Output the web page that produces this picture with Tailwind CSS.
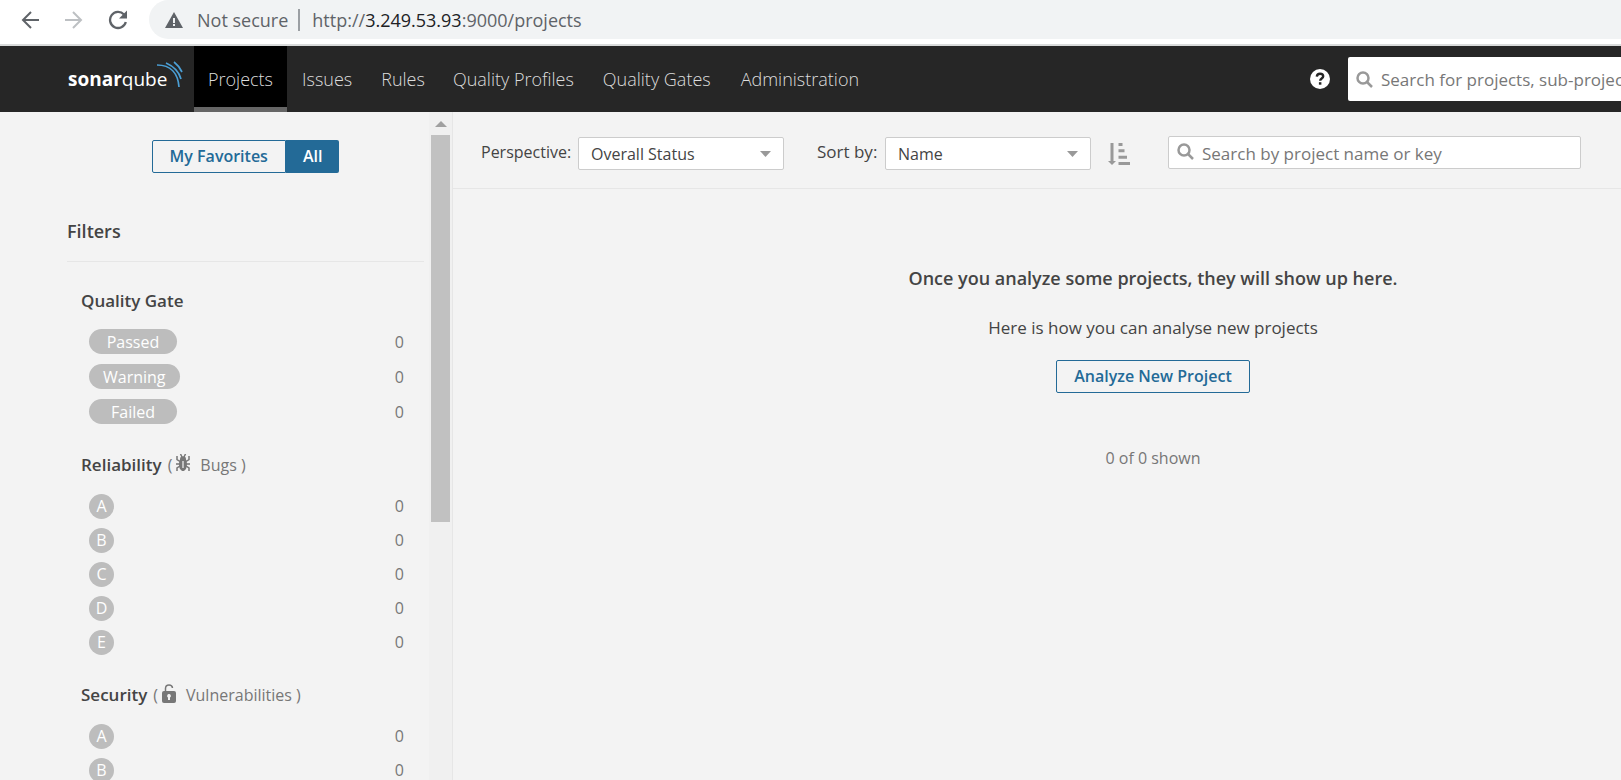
<!DOCTYPE html>
<html lang="en">
<head>
<meta charset="utf-8">
<title>Projects</title>
<script src="https://cdn.jsdelivr.net/npm/@tailwindcss/browser@4"></script>
</head>
<body class="flex h-screen flex-col overflow-hidden bg-[#f3f3f3] font-['Open_Sans','Noto_Sans',sans-serif] text-[17px] leading-6 font-normal text-[#444]">

<!-- Browser toolbar -->
<div class="flex h-[46px] shrink-0 items-start border-b-2 border-[#d9dbdb] bg-white">
  <div class="flex h-[39px] w-[149px] shrink-0 items-center gap-6 pl-5 text-[#5f6368]">
    <button aria-label="Back" class="size-5"><svg viewBox="0 0 20 20" class="size-5" fill="none" stroke="currentColor" stroke-width="2"><path d="M19 10H3M11 2L3 10l8 8"/></svg></button>
    <button aria-label="Forward" class="size-5 text-[#bdc0c3]"><svg viewBox="0 0 20 20" class="size-5" fill="none" stroke="currentColor" stroke-width="2"><path d="M1 10h16M9 2l8 8-8 8"/></svg></button>
    <button aria-label="Reload" class="size-5"><svg viewBox="0 0 20 20" class="size-5" fill="none" stroke="currentColor" stroke-width="2.3"><path d="M16 4.600A8 8 0 1 0 17.800 12"/><path d="M19 .5V8.500h-8z" fill="currentColor" stroke="none"/></svg></button>
  </div>
  <div class="flex h-[39px] min-w-0 flex-1 items-center rounded-l-full bg-[#f1f3f4] pl-4 text-lg text-[#5f6368]">
    <svg viewBox="0 0 18 16" class="mr-3.5 h-4 w-[18px] shrink-0"><path d="M9 0l9 16H0z" fill="#5f6368"/><path d="M8 6h2v5H8zM8 12h2v2H8z" fill="#f1f3f4"/></svg>
    <span class="whitespace-nowrap">Not secure</span>
    <span class="mr-3 ml-2.5 h-[22px] w-0.5 bg-[#9b9fa3]"></span>
    <span class="whitespace-nowrap">http://<span class="text-[#202124]">3.249.53.93</span>:9000/projects</span>
  </div>
</div>

<!-- Application navigation -->
<header class="flex h-[66px] shrink-0 items-stretch bg-[#262626] pl-[68px] text-[#ddd]">
  <a href="#" aria-label="SonarQube" class="flex w-[126px] shrink-0 items-center text-[19px] text-white">
    <span class="font-bold">sonar</span><span>qube</span>
    <svg viewBox="0 0 26 28" class="-ml-2.5 mb-2 h-7 w-[26px] shrink-0" fill="none" stroke="#4b9fd5" stroke-width="1.700"><path d="M0 4C14 4 21 13 22 26M9 2C16 5 22 11 24 18M17 1C21 4 23 7 25 11"/></svg>
  </a>
  <nav class="flex items-stretch text-lg font-[350]">
    <a href="#" class="flex items-center border-b-[5px] border-[#666] bg-black px-3.5 pt-[5px]">Projects</a>
    <a href="#" class="flex items-center px-[15px]">Issues</a>
    <a href="#" class="flex items-center px-3.5">Rules</a>
    <a href="#" class="flex items-center px-3.5">Quality Profiles</a>
    <a href="#" class="flex items-center px-[15px]">Quality Gates</a>
    <a href="#" class="flex items-center px-[15px]">Administration</a>
  </nav>
  <div class="ml-auto flex w-[311px] shrink-0 items-center gap-[18px] overflow-hidden">
    <button aria-label="Help" class="size-5 shrink-0"><svg viewBox="0 0 20 20" class="size-5"><circle cx="10" cy="10" r="10" fill="#fff"/><path d="M6.800 7.600C7 5.600 8.300 4.700 10 4.700s3.200 1 3.200 2.600c0 2.200-3 2.200-3 4.400" fill="none" stroke="#262626" stroke-width="2.400"/><path d="M8.900 13.200h2.500v2.500H8.900z" fill="#262626"/></svg></button>
    <label class="flex h-11 w-[413px] shrink-0 items-center gap-2 rounded-[2px] bg-white pl-2">
      <svg viewBox="0 0 17 17" class="size-[17px] shrink-0" fill="none" stroke="#999" stroke-width="2.500"><circle cx="7" cy="7" r="5.500"/><path d="M11 11l5 5"/></svg>
      <input aria-label="Search for projects" placeholder="Search for projects, sub-projects and files..." class="w-full bg-transparent pt-0.5 outline-none placeholder:text-[#777]">
    </label>
  </div>
</header>

<div class="flex min-h-0 flex-1">
  <!-- Filters -->
  <aside class="flex w-[453px] shrink-0 overflow-hidden border-r border-[#e6e6e6]">
    <div class="min-w-0 flex-1 pt-7 pr-[5px] pl-[67px]">
      <div class="flex justify-center text-base font-semibold">
        <button class="h-[33px] rounded-l-[2px] border border-[#236a97] px-[17px] pb-0.5 text-[#236a97]">My Favorites</button>
        <button class="h-[33px] rounded-r-[2px] bg-[#236a97] px-[17px] pb-0.5 text-white">All</button>
      </div>
      <h2 class="mt-[46px] h-[43px] border-b border-[#e6e6e6] text-lg leading-6 font-semibold">Filters</h2>

      <section class="mt-[27px] pr-5 pl-3.5">
        <h3 class="mb-[11px] flex h-6 items-center font-semibold">Quality Gate</h3>
        <ul class="pl-2 text-base text-[#777]">
          <li class="flex h-[35px] items-center justify-between"><span class="flex h-[25px] min-w-[88px] items-center justify-center rounded-full bg-[#bdbdbd] px-3.5 text-white">Passed</span>0</li>
          <li class="flex h-[35px] items-center justify-between"><span class="flex h-[25px] min-w-[88px] items-center justify-center rounded-full bg-[#bdbdbd] px-3.5 text-white">Warning</span>0</li>
          <li class="flex h-[35px] items-center justify-between"><span class="flex h-[25px] min-w-[88px] items-center justify-center rounded-full bg-[#bdbdbd] px-3.5 text-white">Failed</span>0</li>
        </ul>
      </section>

      <section class="mt-6 pr-5 pl-3.5">
        <h3 class="mb-3 flex h-6 items-center font-semibold">Reliability
          <span class="ml-1.5 flex items-center text-base font-normal text-[#777]">(
            <svg viewBox="0 0 14 18" class="mr-2.5 mb-1 ml-1 h-[18px] w-3.5" fill="none" stroke="#777" stroke-width="1.500"><path d="M4.500 0l1.500 3M9.500 0L8 3M1 2v3.500l3 2M13 2v3.500l-3 2M0 10h4M14 10h-4M1 17v-3l3-2M13 17v-3l-3-2"/><path d="M4 5.500C4 3.500 5 2.300 7 2.300s3 1.200 3 3.200c1.300 2 1.300 8-.3 9.700C9 16.300 8 17 7 17s-2-.7-2.700-1.800C2.700 13.500 2.700 7.500 4 5.500z" fill="#777" stroke="none"/><path d="M7 7v7" stroke="#ddd"/></svg>
            Bugs )</span>
        </h3>
        <ul class="pl-2 text-base text-[#777]">
          <li class="flex h-[34px] items-center justify-between"><span class="flex size-[25px] items-center justify-center rounded-full bg-[#bdbdbd] text-white">A</span>0</li>
          <li class="flex h-[34px] items-center justify-between"><span class="flex size-[25px] items-center justify-center rounded-full bg-[#bdbdbd] text-white">B</span>0</li>
          <li class="flex h-[34px] items-center justify-between"><span class="flex size-[25px] items-center justify-center rounded-full bg-[#bdbdbd] text-white">C</span>0</li>
          <li class="flex h-[34px] items-center justify-between"><span class="flex size-[25px] items-center justify-center rounded-full bg-[#bdbdbd] text-white">D</span>0</li>
          <li class="flex h-[34px] items-center justify-between"><span class="flex size-[25px] items-center justify-center rounded-full bg-[#bdbdbd] text-white">E</span>0</li>
        </ul>
      </section>

      <section class="mt-6 pr-5 pl-3.5">
        <h3 class="mb-3 flex h-6 items-center font-semibold">Security
          <span class="ml-1.5 flex items-center text-base font-normal text-[#777]">(
            <svg viewBox="0 0 14 19" class="mr-2.5 mb-1 ml-1 h-[19px] w-3.5"><path d="M3.500 8V4.500C3.500 2.300 5 1 7 1s3.300 1 3.500 3" fill="none" stroke="#777" stroke-width="1.500"/><rect y="7" width="14" height="12" rx="2" fill="#777"/><path d="M7 10a1.900 1.900 0 0 1 1 3.500V16H6v-2.500A1.900 1.900 0 0 1 7 10z" fill="#f3f3f3"/></svg>
            Vulnerabilities )</span>
        </h3>
        <ul class="pl-2 text-base text-[#777]">
          <li class="flex h-[34px] items-center justify-between"><span class="flex size-[25px] items-center justify-center rounded-full bg-[#bdbdbd] text-white">A</span>0</li>
          <li class="flex h-[34px] items-center justify-between"><span class="flex size-[25px] items-center justify-center rounded-full bg-[#bdbdbd] text-white">B</span>0</li>
        </ul>
      </section>
    </div>
    <!-- Scroll bar -->
    <div class="flex w-[23px] shrink-0 flex-col items-center bg-[#f0f0f0]">
      <svg viewBox="0 0 12 6" class="mt-[9px] mb-2 h-1.5 w-3 shrink-0"><path d="M6 0l6 6H0z" fill="#a0a0a0"/></svg>
      <div class="h-[387px] w-[19px] shrink-0 bg-[#c1c1c1]"></div>
    </div>
  </aside>

  <!-- Project list -->
  <main class="min-w-0 flex-1 overflow-hidden">
    <div class="flex h-[77px] items-start border-b border-[#e6e6e6] pt-6 pl-7">
      <label for="perspective" class="w-[97px] shrink-0 pt-1 text-base">Perspective:</label>
      <div class="relative mt-px h-[33px] w-[206px] shrink-0">
        <select id="perspective" class="h-full w-full appearance-none rounded-[2px] border border-[#ccc] bg-white px-3 text-base"><option>Overall Status</option></select>
        <svg viewBox="0 0 11 6" class="pointer-events-none absolute top-3.5 right-[13px] h-1.5 w-[11px]"><path d="M0 0h11L5.500 6z" fill="#999"/></svg>
      </div>
      <label for="sort" class="ml-[33px] w-[68px] shrink-0 pt-1">Sort by:</label>
      <div class="relative mt-px h-[33px] w-[206px] shrink-0">
        <select id="sort" class="h-full w-full appearance-none rounded-[2px] border border-[#ccc] bg-white px-3 text-base"><option>Name</option></select>
        <svg viewBox="0 0 11 6" class="pointer-events-none absolute top-3.5 right-[13px] h-1.5 w-[11px]"><path d="M0 0h11L5.500 6z" fill="#999"/></svg>
      </div>
      <button aria-label="Reverse sort order" class="mt-[7px] ml-[17px] h-[22px] w-[22px] shrink-0"><svg viewBox="0 0 22 22" class="size-[22px]" fill="#999"><path d="M2.500 0h3v18H8l-4 4-4-4h2.500zM10.500 0h4v3h-4zM10.500 6.300h6v3h-6zM10.500 12.700h8.500v3h-8.500zM10.500 19H22v3H10.500z"/></svg></button>
      <label class="ml-[38px] flex h-[33px] w-[413px] shrink-0 items-center gap-2 rounded-[2px] border border-[#ccc] bg-white pl-2">
        <svg viewBox="0 0 17 17" class="mb-0.5 size-[17px] shrink-0" fill="none" stroke="#999" stroke-width="2.500"><circle cx="7" cy="7" r="5.500"/><path d="M11 11l5 5"/></svg>
        <input aria-label="Search by project name or key" placeholder="Search by project name or key" class="w-full bg-transparent pt-0.5 outline-none placeholder:text-[#777]">
      </label>
    </div>
    <!-- The list column is wider than the window and runs off its right edge -->
    <div class="-mr-[232px] flex flex-col items-center pt-[77px]">
      <h1 class="text-lg leading-6 font-semibold">Once you analyze some projects, they will show up here.</h1>
      <p class="mt-[26px]">Here is how you can analyse new projects</p>
      <button class="mt-5 h-[33px] rounded-[2px] border border-[#236a97] px-[17px] pb-0.5 text-base font-semibold text-[#236a97]">Analyze New Project</button>
      <p class="mt-[53px] text-base text-[#777]">0 of 0 shown</p>
    </div>
  </main>
</div>
</body>
</html>
